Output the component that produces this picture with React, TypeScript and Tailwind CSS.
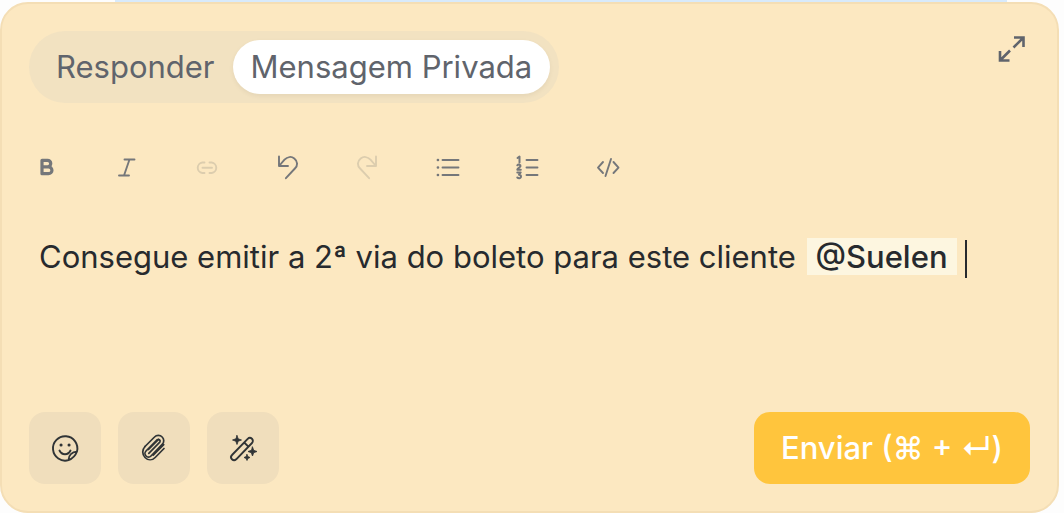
import { useState, type ReactNode } from "react";

type IconProps = { children: ReactNode; width?: number };

function Icon({ children, width = 1.9 }: IconProps) {
  return (
    <svg
      viewBox="0 0 32 32"
      className="size-8 shrink-0"
      fill="none"
      stroke="currentColor"
      strokeWidth={width}
      strokeLinecap="round"
      strokeLinejoin="round"
      aria-hidden="true"
    >
      {children}
    </svg>
  );
}

const tools: { label: string; disabled?: boolean; icon: ReactNode }[] = [
  {
    label: "Negrito",
    icon: (
      <Icon width={3.2}>
        <path d="M11 9.300h5.500a3.200 3.200 0 0 1 0 6.500h-5.500zM11 15.800h6.500a3.400 3.400 0 0 1 0 6.900h-6.500z" />
      </Icon>
    ),
  },
  {
    label: "Itálico",
    icon: (
      <Icon>
        <path d="M13.500 8.500h10M8 24.500h10M18.500 8.500l-5.500 16" />
      </Icon>
    ),
  },
  {
    label: "Link",
    disabled: true,
    icon: (
      <Icon>
        <path d="M13.500 11.500h-2.200a5.300 5.300 0 0 0 0 10.500h2.200M18.500 11.500h2.200a5.300 5.300 0 0 1 0 10.500h-2.200M11.500 16.700h9.500" />
      </Icon>
    ),
  },
  {
    label: "Desfazer",
    icon: (
      <Icon>
        <path d="M8 5.500v9.500h9M8.500 14.500l5-5.800c3-3.200 7-3.400 9.800-1.200c3.600 2.900 3.600 7 .6 10l-9 9.700" />
      </Icon>
    ),
  },
  {
    label: "Refazer",
    disabled: true,
    icon: (
      <Icon>
        <path d="M25 5.500v9.500h-9M24.500 14.500l-5-5.800c-3-3.200-7-3.400-9.800-1.200c-3.600 2.900-3.600 7-.6 10l9 9.700" />
      </Icon>
    ),
  },
  {
    label: "Lista com marcadores",
    icon: (
      <Icon>
        <path d="M11.500 9h16M11.500 16.500h16M11.500 24h16" />
        <path d="M6.900 9h.1M6.900 16.500h.1M6.900 24h.1" strokeWidth="2.600" />
      </Icon>
    ),
  },
  {
    label: "Lista numerada",
    icon: (
      <Icon>
        <path d="M15.500 9h11M15.500 16.500h11M15.500 24h11" />
        <path
          d="M6.500 7l2-1.500v6M6.300 14.300c1-1.200 3.400-.8 3.200.8c-.1 1-3 2.500-3.200 3.600h3.500M6.300 21.500h3.400l-1.700 2.200c2.600 0 2.600 3.500.2 3.500c-.8 0-1.400-.2-1.900-.7"
          strokeWidth="2"
        />
      </Icon>
    ),
  },
  {
    label: "Código",
    icon: (
      <Icon>
        <path d="M12 11l-5 5.700l5 5.300M22.500 11l5 5.700l-5 5.300M20 8l-5.500 17" />
      </Icon>
    ),
  },
];

const actions: { label: string; icon: ReactNode }[] = [
  {
    label: "Inserir emoji",
    icon: (
      <Icon>
        <path d="M19.500 28.200A12.200 12.200 0 1 1 28 19.500c-1.500 4-4.500 7.200-8.500 8.700zM19.500 28c.2-4.800 3.500-8 8.300-8.400" />
        <path d="M10.500 18.500c1.200 2.600 3.200 3.700 5.500 3.700s4.300-1.100 5.500-3.700" />
        <path d="M12 13h.1M20 13h.1" strokeWidth="3" />
      </Icon>
    ),
  },
  {
    label: "Anexar arquivo",
    icon: (
      <Icon width={1.700}>
        <path d="M7 14.500L16.500 5a5.200 5.200 0 0 1 7.700 0a5.200 5.200 0 0 1 0 7.400L13 24a3.500 3.500 0 0 1-5-5L19.300 7.700a1.800 1.800 0 0 1 2.500 2.500L10.800 21.300" />
        <path d="M7 14.500c-3 3.200-3 8 0 11s7.200 3 10.200 0L26 16.500M10.500 17.500L20.500 7.500M15.200 23.200l10.500-10.500" />
      </Icon>
    ),
  },
  {
    label: "Assistente de IA",
    icon: (
      <Icon>
        <path d="M5 23L20.700 6.800a2.900 2.900 0 0 1 4.300 4.200L9.200 27.300a2.900 2.900 0 0 1-4.200-4.300zM17.200 10.500l4.200 4.200" />
        <path
          d="M10 3.500l1.200 3.300l3.300 1.200l-3.300 1.200L10 12.500l-1.200-3.300L5.500 8l3.300-1.200zM25.500 15l1.200 3.300l3.300 1.200l-3.300 1.200L25.500 24l-1.200-3.300L21 19.500l3.300-1.200zM20 22.500l.9 2.100l2.100.9l-2.100.9l-.9 2.100l-.9-2.100l-2.100-.9l2.100-.9z"
          fill="currentColor"
          strokeWidth="0.800"
        />
      </Icon>
    ),
  },
];

const modes = ["Responder", "Mensagem Privada"];

export default function App() {
  const [mode, setMode] = useState("Mensagem Privada");

  return (
    <main className="bg-[#fdfdfd] pr-[5px] font-['Inter',sans-serif]">
      <div className="ml-[115px] mr-[52px] h-0.5 bg-[#d8eafb]" />
      <section className="rounded-[28px] border-2 border-[#f4deb5] bg-[#fce8c1] p-[27px]">
        <header className="flex items-start justify-between">
          <div role="group" aria-label="Tipo de mensagem" className="flex rounded-full bg-[#f2e2c1] p-[9px]">
            {modes.map((name) => (
              <button
                key={name}
                type="button"
                aria-pressed={mode === name}
                onClick={() => setMode(name)}
                className={
                  mode === name
                    ? "h-[54px] rounded-full bg-white px-[18px] text-[31px] text-[#60646c] shadow-[0_2px_5px_rgba(0,0,0,0.06)]"
                    : "h-[54px] rounded-full px-[18px] text-[31px] text-[#60646c]"
                }
              >
                {name}
              </button>
            ))}
          </div>
          <button type="button" aria-label="Expandir editor" className="flex size-9 items-center justify-center text-[#60646c]">
            <svg
              viewBox="0 0 32 32"
              className="size-8"
              fill="none"
              stroke="currentColor"
              strokeWidth="2.600"
              aria-hidden="true"
            >
              <path d="M18 4.500h9.500v9.500M27 5l-9.500 9.500M4 18v9.500h9.500M4.500 27l9.500-9.500" />
            </svg>
          </button>
        </header>

        <div role="toolbar" aria-label="Formatação" className="mt-12 flex gap-11">
          {tools.map((tool) => (
            <button
              key={tool.label}
              type="button"
              aria-label={tool.label}
              disabled={tool.disabled}
              className="flex h-8 w-9 items-center justify-center text-[#75777a] disabled:text-[#dccdae]"
            >
              {tool.icon}
            </button>
          ))}
        </div>

        <div
          role="textbox"
          aria-label="Mensagem"
          aria-multiline="true"
          contentEditable
          suppressContentEditableWarning
          className="mt-[50px] min-h-[179px] px-[10px] text-[31px] leading-[48px] text-[#272a2e] outline-none"
        >
          Consegue emitir a 2ª via do boleto para este cliente{" "}
          <span className="ml-0.5 bg-[#fdf6e0] px-[9px] font-medium">@Suelen</span>{" "}
          <span className="inline-block h-[38px] w-0.5 bg-[#272a2e] align-[-10px]" />
        </div>

        <footer className="flex items-center justify-between">
          <div className="flex gap-[17px]">
            {actions.map((action) => (
              <button
                key={action.label}
                type="button"
                aria-label={action.label}
                className="flex size-[72px] items-center justify-center rounded-2xl bg-[#f0debc] text-[#303436]"
              >
                {action.icon}
              </button>
            ))}
          </div>
          <button type="button" className="h-[72px] rounded-2xl bg-[#ffc53d] px-[27px] text-[31px] font-medium text-white">
            Enviar (⌘ + ↵)
          </button>
        </footer>
      </section>
    </main>
  );
}
